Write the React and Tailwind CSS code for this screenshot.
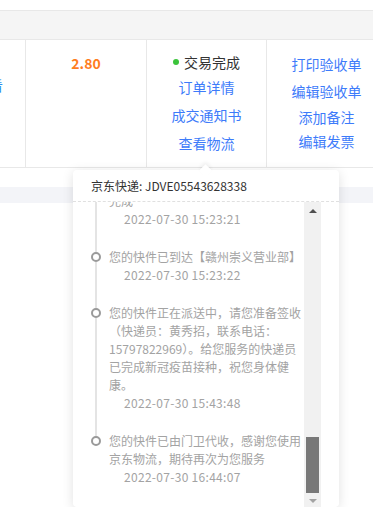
import React from "react";

const font = { fontFamily: '"Noto Sans CJK SC", "Noto Sans", sans-serif' };

const tracks = [
  {
    text: "您的快件在【赣州崇义营业部】分拣完成",
    time: "2022-07-30 15:23:21",
  },
  {
    text: "您的快件已到达【赣州崇义营业部】",
    time: "2022-07-30 15:23:22",
  },
  {
    text: "您的快件正在派送中，请您准备签收（快递员：黄秀招，联系电话：15797822969）。给您服务的快递员已完成新冠疫苗接种，祝您身体健康。",
    time: "2022-07-30 15:43:48",
  },
  {
    text: "您的快件已由门卫代收，感谢您使用京东物流，期待再次为您服务",
    time: "2022-07-30 16:44:07",
  },
];

function TrackItem({ item, last }) {
  return (
    <li className="flex">
      <div className="ml-[18px] mr-[8px] flex w-[10px] flex-col items-center">
        <div className="h-[4px] w-[2px] bg-[#e4e4e4]" />
        <div className="h-[10px] w-[10px] shrink-0 rounded-full border-2 border-[#9a9a9a] bg-white" />
        {!last && <div className="w-[2px] flex-1 bg-[#e4e4e4]" />}
      </div>
      <div className="w-[195px] pb-[20px] text-[12px] leading-[18px] text-[#a3a3a3]">
        <p>{item.text}</p>
        <p className="pl-[15px] tracking-[0.3px]">{item.time}</p>
      </div>
    </li>
  );
}

function Scrollbar() {
  return (
    <div className="flex w-[17px] flex-col bg-[#f1f1f1]">
      <div className="flex h-[17px] items-center justify-center">
        <div className="h-0 w-0 border-x-[4px] border-b-[4px] border-x-transparent border-b-[#505050]" />
      </div>
      <div className="h-[218px]" />
      <div className="mx-[2px] h-[56px] bg-[#787878]" />
      <div className="flex justify-center pt-[6px]">
        <div className="h-0 w-0 border-x-[4px] border-t-[4px] border-x-transparent border-t-[#a3a3a3]" />
      </div>
    </div>
  );
}

export default function App() {
  return (
    <div className="relative h-[507px] w-[373px] overflow-hidden bg-white" style={font}>
      <div className="h-[10px]" />
      <div className="h-[30px] border-y border-[#e8e8e8] bg-[#f5f5f5]" />
      <div className="grid h-[128px] w-[386px] grid-cols-[25px_121px_120px_120px] border-b border-[#e8e8e8] text-[14px] leading-[20px]">
        <div className="flex justify-end overflow-hidden pt-[35px]">
          <span className="mr-[22px] whitespace-nowrap text-[#2a8ff0]">查看</span>
        </div>
        <div className="border-l border-[#e8e8e8] pt-[13px] text-center font-bold text-[#ff7d1f]">
          2.80
        </div>
        <div className="flex flex-col items-center border-l border-[#e8e8e8] pt-[12px]">
          <div className="flex items-center text-[#333]">
            <span className="mr-[5px] h-[6px] w-[6px] rounded-full bg-[#3bc43b]" />
            交易完成
          </div>
          <a className="mt-[5px] text-[#3d7bfa]">订单详情</a>
          <a className="mt-[8px] text-[#3d7bfa]">成交通知书</a>
          <a className="mt-[8px] text-[#3d7bfa]">查看物流</a>
        </div>
        <div className="flex flex-col items-center border-l border-[#e8e8e8] pt-[14px] text-[#3d7bfa]">
          <a>打印验收单</a>
          <a className="mt-[7px]">编辑验收单</a>
          <a className="mt-[6px]">添加备注</a>
          <a className="mt-[4px]">编辑发票</a>
        </div>
      </div>
      <div className="h-[19px]" />
      <div className="h-[16px] bg-[#f3f4f8]" />

      <div className="absolute left-[73px] top-[170px] w-[266px] rounded-[4px] bg-white shadow-[0_2px_12px_rgba(0,0,0,0.12)]">
        <div className="absolute -top-[4px] left-[128px] h-[9px] w-[9px] rotate-45 bg-white shadow-[-2px_-2px_4px_rgba(0,0,0,0.05)]" />
        <div className="relative flex h-[32px] items-center border-b border-dashed border-[#e0e0e0] px-[18px] text-[12px] text-[#333]">
          京东快递: JDVE05543628338
        </div>
        <div className="flex h-[305px]">
          <div className="w-[231px] overflow-hidden">
            <ul className="-mt-[28px]">
              {tracks.map((t, i) => (
                <TrackItem key={i} item={t} last={i === tracks.length - 1} />
              ))}
            </ul>
          </div>
          <Scrollbar />
        </div>
      </div>
    </div>
  );
}
